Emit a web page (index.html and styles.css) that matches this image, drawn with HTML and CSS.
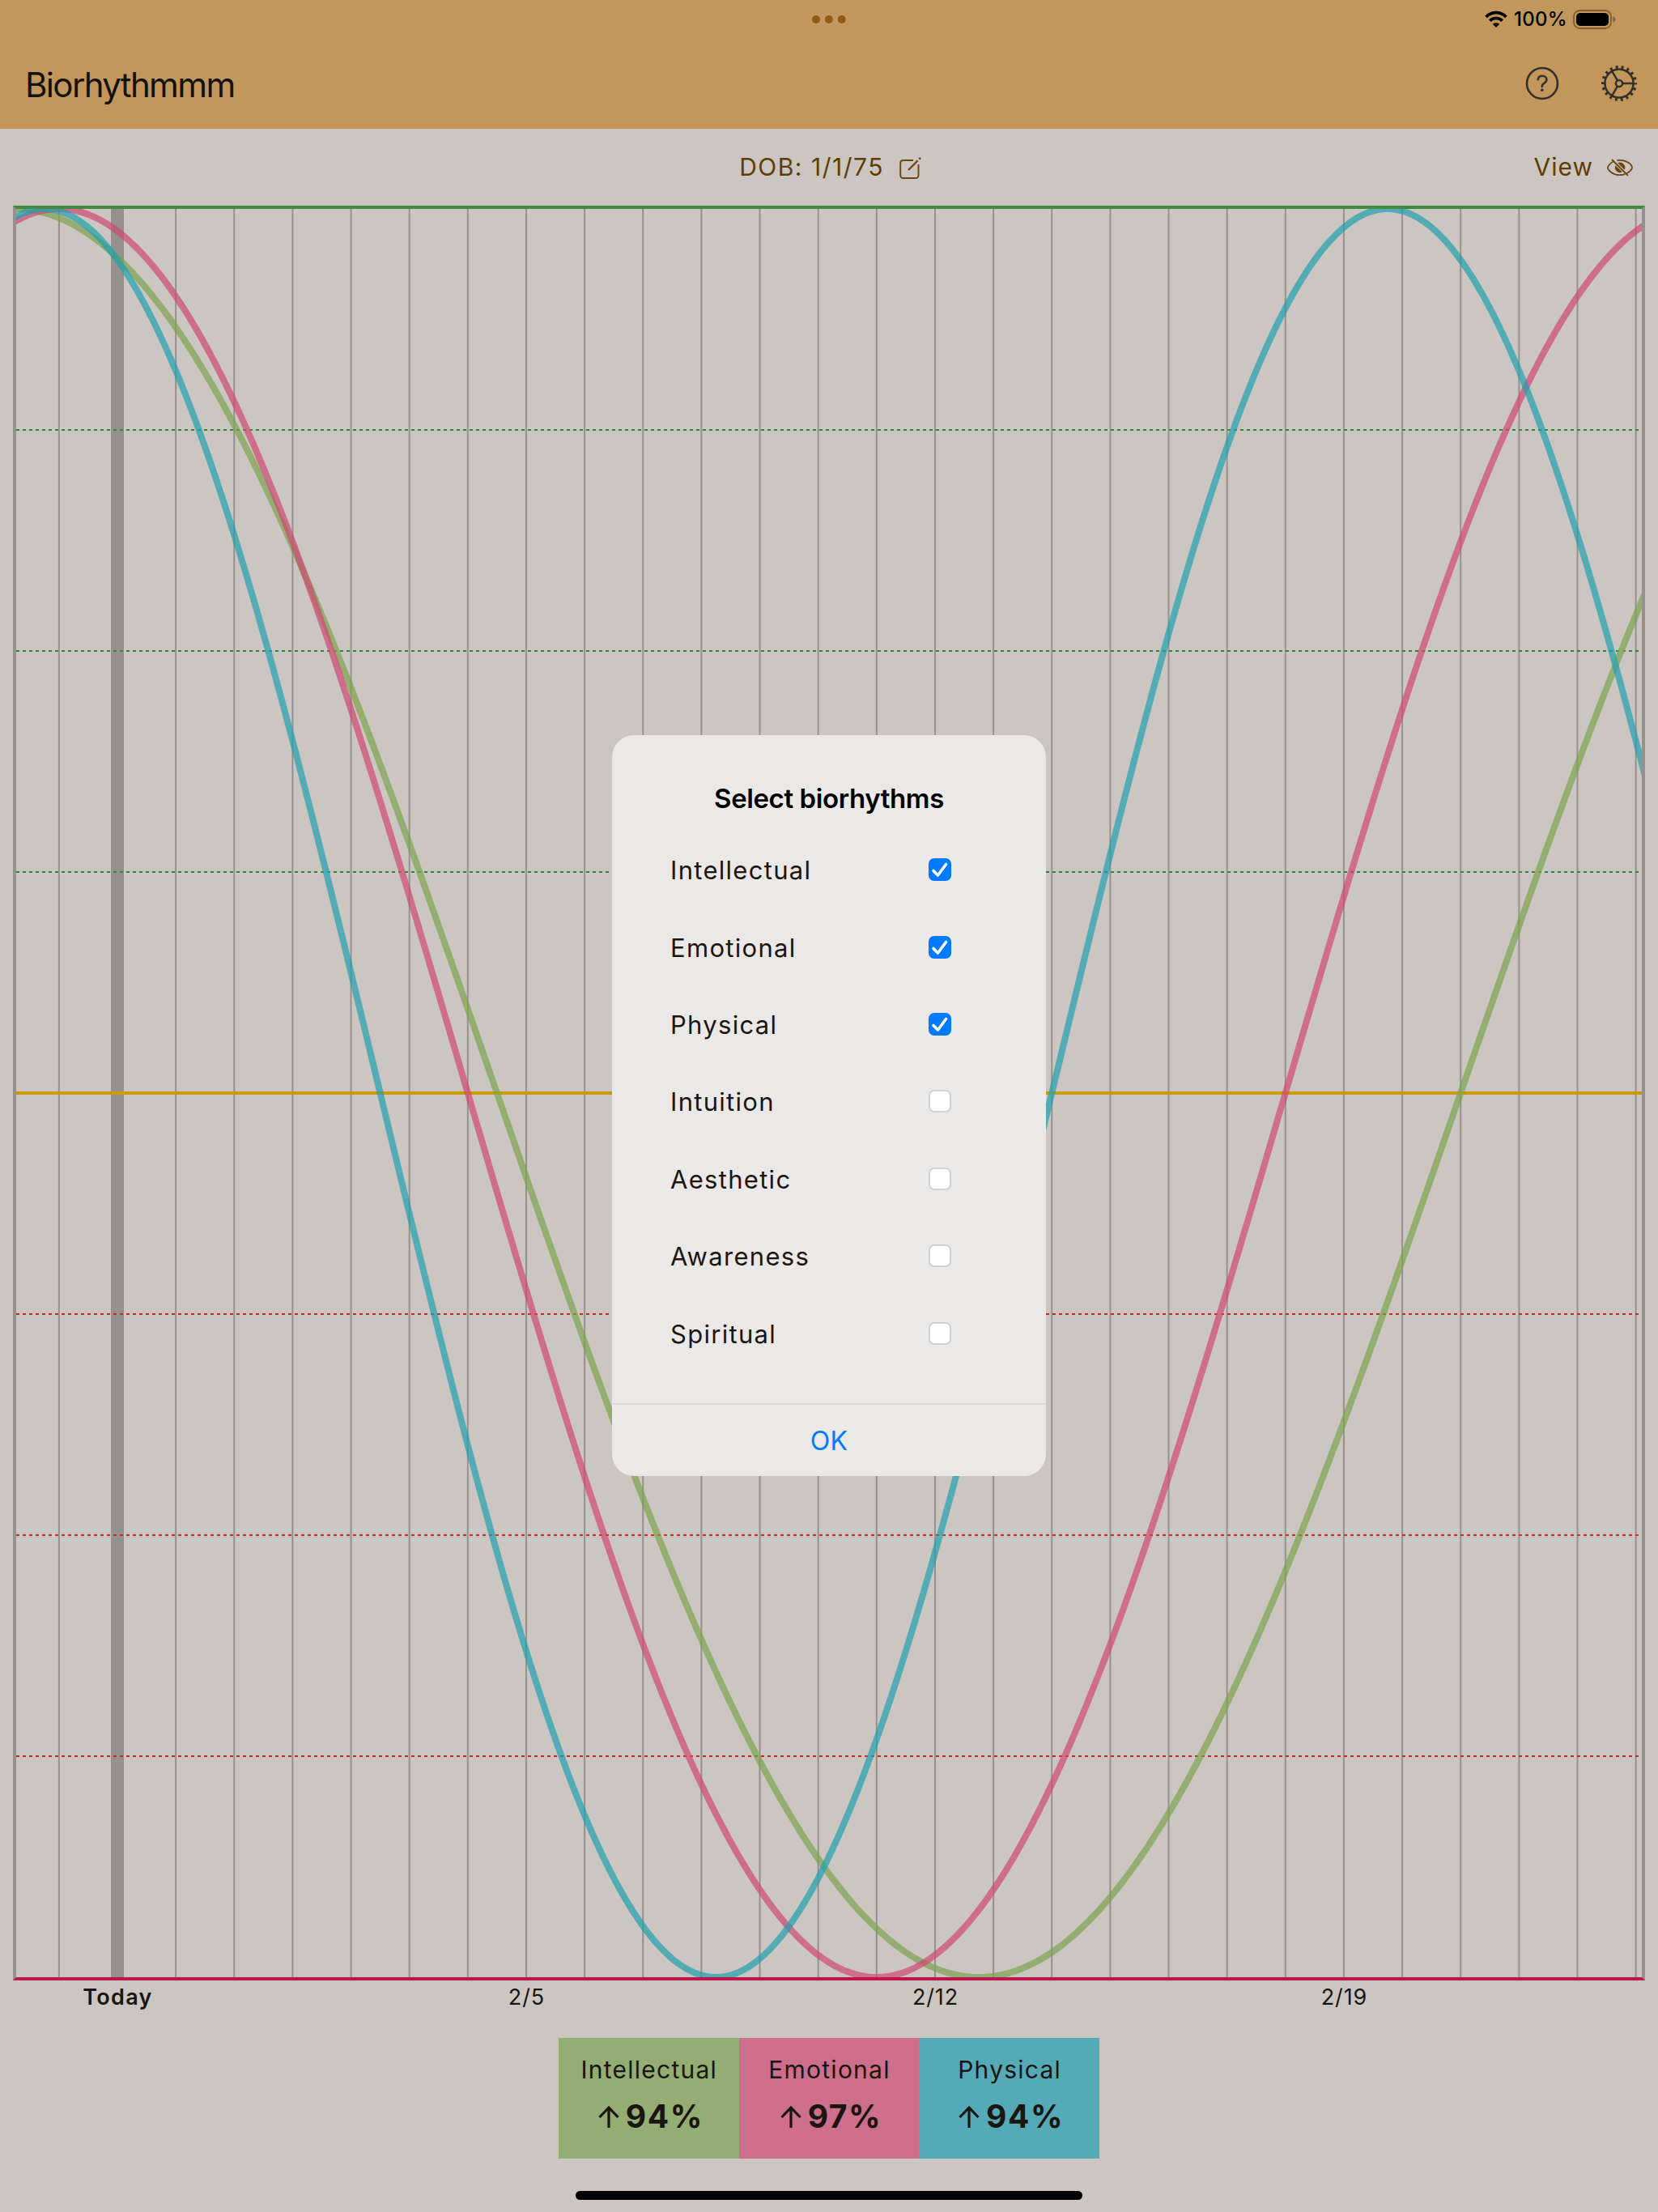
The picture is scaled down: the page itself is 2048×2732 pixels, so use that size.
FILE: index.html
```html
<!DOCTYPE html>
<html lang="en">
<head>
<meta charset="utf-8">
<title>Biorhythmmm</title>
<link rel="stylesheet" href="styles.css">
</head>
<body>
<header class="header">
  <div class="status">
    <span class="status-side"></span>
    <svg class="dots" viewBox="0 0 42 10"><circle cx="5" cy="5" r="5"/><circle cx="20.8" cy="5" r="5"/><circle cx="36.7" cy="5" r="5"/></svg>
    <span class="status-side status-right">
      <svg class="wifi" viewBox="0 0 28 20" fill="none" stroke="#000" stroke-width="3.8"><path d="M1.6 6.9A17.4 17.4 0 0 1 26.4 6.9"/><path d="M6.3 11.7A10.8 10.8 0 0 1 21.7 11.7"/><path d="M14 20L9.8 15.8A6 6 0 0 1 18.2 15.8Z" fill="#000" stroke="none"/></svg>
      <span class="pct">100%</span>
      <svg class="battery" viewBox="0 0 54 24"><rect x="1" y="1" width="46" height="22" rx="7.5" fill="none" stroke="#7d6039" stroke-width="1.8"/><rect x="4" y="4" width="40" height="16" rx="5" fill="#000"/><path d="M49.5 8Q52.5 9.5 52.5 12T49.5 16Z" fill="#7d6039"/></svg>
    </span>
  </div>
  <div class="toolbar">
    <h1 class="title">Biorhythmmm</h1>
    <div class="tools">
      <svg class="help" viewBox="0 0 42 42" fill="none" stroke="#33302b" stroke-width="2.6" stroke-linecap="round"><circle cx="21" cy="21" r="19"/><path d="M15.8 16.2C16 13.3 18.2 11.8 21 11.8C24.2 11.8 26.4 13.6 26.4 16.3C26.4 18.4 25.2 19.6 23.5 20.7C21.5 22 20.8 22.9 20.8 25"/><circle cx="20.8" cy="29.2" r="1.8" fill="#33302b" stroke="none"/></svg>
      <svg class="gear" viewBox="-23 -23 46 46" fill="none" stroke="#33302b" stroke-width="2.5"><circle r="17.6"/><circle r="4.1"/><path d="M4.2 0H17M-2.1 -3.6L-8.8 -15.2M-2.1 3.6L-8.8 15.2"/><circle r="20" stroke-width="4" stroke-dasharray="2.9 4.081" stroke-dashoffset="1.45"/></svg>
    </div>
  </div>
</header>
<nav class="subbar">
  <span></span>
  <a class="link dob-link"><span class="dob">DOB: 1/1/75</span>
    <svg class="edit" viewBox="0 0 28 28" fill="none" stroke="#6b4412" stroke-width="1.9"><path d="M18 5H6Q2.2 5 2.2 8.500V23.200Q2.200 27 6 27H20.800Q24.500 27 24.500 23.200V10"/><path d="M12 17L23.700 5.300" stroke-width="2.3"/><path d="M25.400 3.600L27 2" stroke-width="2.5"/></svg></a>
  <a class="link view"><span class="view-text">View</span>
    <svg class="eye" viewBox="0 0 32 24" fill="none" stroke="#6b4412" stroke-width="1.800"><path d="M8.500 4.200C4 6.200 1 9.800 1 12C1 15.500 7.500 21.200 16 21.200C18.400 21.200 20.500 20.800 22.400 20"/><path d="M12.500 3.100C13.600 2.900 14.800 2.800 16 2.800C24.500 2.800 31 8.500 31 12C31 14 28.300 17.300 24.200 19.200"/><path d="M6 2L26 22"/><path d="M10.500 9.200A6.300 6.300 0 0 0 18.800 17.600Z" fill="#6b4412" stroke="none"/><path d="M13.200 6.300A6.300 6.300 0 0 1 21.600 14.800Z" fill="#6b4412" stroke="none"/></svg></a>
</nav>
<main class="chart">
  <svg class="plot" id="plot" viewBox="20 258 2008 2184"></svg>
</main>
<div class="dates">
  <span class="today">Today</span><span>2/5</span><span>2/12</span><span>2/19</span>
</div>
<section class="legend">
  <div class="card intellectual"><span class="label">Intellectual</span><span class="value"><svg class="arrow" viewBox="0 0 26 27"><path d="M13 27V2.500M1.500 14L13 2L24.500 14"/></svg>94%</span></div>
  <div class="card emotional"><span class="label">Emotional</span><span class="value"><svg class="arrow" viewBox="0 0 26 27"><path d="M13 27V2.500M1.500 14L13 2L24.500 14"/></svg>97%</span></div>
  <div class="card physical"><span class="label">Physical</span><span class="value"><svg class="arrow" viewBox="0 0 26 27"><path d="M13 27V2.500M1.500 14L13 2L24.500 14"/></svg>94%</span></div>
</section>
<div class="home"></div>
<div class="dialog">
  <h2 class="dialog-title">Select biorhythms</h2>
  <div class="options">
    <div class="option"><span>Intellectual</span><i class="box on"><svg viewBox="0 0 28 28"><path d="M6 15.500L11.500 21L21.500 7.500"/></svg></i></div>
    <div class="option"><span>Emotional</span><i class="box on"><svg viewBox="0 0 28 28"><path d="M6 15.500L11.500 21L21.500 7.500"/></svg></i></div>
    <div class="option"><span>Physical</span><i class="box on"><svg viewBox="0 0 28 28"><path d="M6 15.500L11.500 21L21.500 7.500"/></svg></i></div>
    <div class="option"><span>Intuition</span><i class="box"></i></div>
    <div class="option"><span>Aesthetic</span><i class="box"></i></div>
    <div class="option"><span>Awareness</span><i class="box"></i></div>
    <div class="option"><span>Spiritual</span><i class="box"></i></div>
  </div>
  <div class="ok"><span>OK</span></div>
</div>
<script src="chart.js"></script>
</body>
</html>
```
FILE: styles.css
```css
* { box-sizing: border-box; }
body { margin: 0; width: 2048px; height: 2732px; overflow: hidden; background: #ccc6c2; color: #1a1510; font-family: Inter, "Liberation Sans", sans-serif; display: flex; flex-direction: column; position: relative; }
svg { display: block; flex: none; overflow: visible; }
h1, h2 { margin: 0; }
span { white-space: nowrap; }
.header { height: 159px; background: #c3975b; flex: none; }
.status { height: 48px; display: flex; align-items: center; justify-content: space-between; }
.status-side { width: 600px; }
.dots { width: 42px; height: 10px; fill: #905c18; }
.status-right { display: flex; align-items: center; justify-content: flex-end; padding-right: 51px; color: #000; }
.wifi { width: 28px; height: 20px; margin-right: 8px; }
.pct { font-size: 24px; font-weight: 500; line-height: 48px; width: 65px; margin-right: 8px; letter-spacing: 0.3px; }
.battery { width: 54px; height: 24px; }
.toolbar { height: 111px; display: flex; justify-content: space-between; padding: 0 25px 0 31px; }
.title { font-size: 42px; font-weight: 400; line-height: 113px; letter-spacing: -1.65px; color: #14120c; }
.tools { display: flex; gap: 51px; align-items: center; padding-bottom: 1px; }
.help { width: 42px; height: 42px; }
.gear { width: 46px; height: 46px; }
.subbar { height: 95px; flex: none; display: grid; grid-template-columns: 1fr auto 1fr; align-items: center; padding: 0 31px; color: #603c05; font-size: 30px; line-height: 95px; }
.link { display: flex; align-items: center; }
.dob-link { padding-left: 3px; }
.edit { width: 28px; height: 28px; margin-left: 18px; }
.view { justify-content: flex-end; }
.eye { width: 32px; height: 24px; margin-left: 17px; }
.dob { letter-spacing: 1.5px; }
.view-text { letter-spacing: 1px; }
.chart { flex: none; height: 2192px; margin: 0 16px; border: 4px solid #96918d; border-top-color: #3d8c40; border-bottom-color: #bd164d; }
.plot { width: 2008px; height: 2184px; overflow: hidden; }
.day { fill: #96918d; }
.zero { fill: #cb9b09; }
.up { stroke: #2f8a38; }
.down { stroke: #c82b20; }
.guide { stroke-width: 2; stroke-dasharray: 4 4; }
.wave { fill: none; stroke-width: 8; stroke-opacity: 0.7; }
.dates { flex: none; height: 71px; display: grid; grid-template-columns: repeat(4, 505px); margin-left: -107px; font-size: 27px; line-height: 41px; text-align: center; letter-spacing: 0.9px; }
.today { font-weight: 600; letter-spacing: 1.3px; }
.legend { flex: none; width: 668px; height: 149px; margin: 0 auto; display: grid; grid-template-columns: 1fr 1fr 1fr; }
.card { display: flex; flex-direction: column; align-items: center; padding-top: 20px; }
.intellectual { background: #94ad73; }
.emotional { background: #cd6e8c; }
.physical { background: #54abb7; }
.label { font-size: 30px; line-height: 38px; letter-spacing: 1.25px; padding-left: 1px; }
.value { font-size: 39px; font-weight: 700; line-height: 46px; margin-top: 16px; letter-spacing: 1.6px; padding-left: 5px; display: flex; align-items: center; }
.arrow { width: 26px; height: 27px; margin-right: 8px; fill: none; stroke: #1a1510; stroke-width: 3.2; }
.home { flex: none; width: 626px; height: 11px; border-radius: 6px; background: #000; margin: 40px auto 0; }
.dialog { position: absolute; left: 756px; top: 908px; width: 536px; height: 915px; border-radius: 27px; background: #eae9e7; display: flex; flex-direction: column; }
.dialog-title { font-size: 33px; font-weight: 600; line-height: 40px; margin-top: 58px; text-align: center; color: #000; letter-spacing: -0.4px; }
.options { margin: 20.5px 117px 0 72px; }
.option { height: 95.4px; display: flex; align-items: center; justify-content: space-between; font-size: 31px; letter-spacing: 1.3px; }
.option span { padding-top: 1px; }
.box { width: 28px; height: 28px; border: 2px solid #cfcfd6; border-radius: 7px; background: #fff; }
.box.on { border: 0; background: #007aff; }
.box path { fill: none; stroke: #fff; stroke-width: 3.6; stroke-linecap: round; stroke-linejoin: round; }
.ok { margin-top: auto; height: 90px; border-top: 2px solid #dddcdb; display: flex; justify-content: center; font-size: 32px; line-height: 89px; letter-spacing: 0.3px; color: #007aff; }
```
FILE: chart.js
```js
const plot = document.getElementById('plot');
const DAY = 72.14, TODAY = 145, MID = 1350, AMP = 1092;

function add(name, attrs) {
  const el = document.createElementNS('http://www.w3.org/2000/svg', name);
  for (const key in attrs) el.setAttribute(key, attrs[key]);
  plot.appendChild(el);
}

for (let d = -1; d <= 26; d++) {
  const w = d === 0 ? 16 : 2;
  add('rect', { class: 'day', x: TODAY + d * DAY - w / 2, y: 258, width: w, height: 2184 });
}
add('rect', { class: 'zero', x: 20, y: 1348, width: 2008, height: 4 });
for (const k of [-3, -2, -1, 1, 2, 3]) {
  add('path', { class: 'guide ' + (k < 0 ? 'up' : 'down'), d: `M20 ${MID + k * 273}H2026` });
}

// Each wave: period in days, days elapsed since its peak, colour.
for (const [period, elapsed, color] of [[33, 1.75, '#7ca24d'], [28, 1, '#ce4872'], [23, 1.25, '#209fae']]) {
  let path = '';
  for (let x = 8; x <= 2040; x += 4) {
    const t = (x - TODAY) / DAY + elapsed;
    path += (path ? 'L' : 'M') + x + ' ' + (MID - AMP * Math.cos(2 * Math.PI * t / period)).toFixed(2);
  }
  add('path', { class: 'wave', d: path, stroke: color });
}
```
